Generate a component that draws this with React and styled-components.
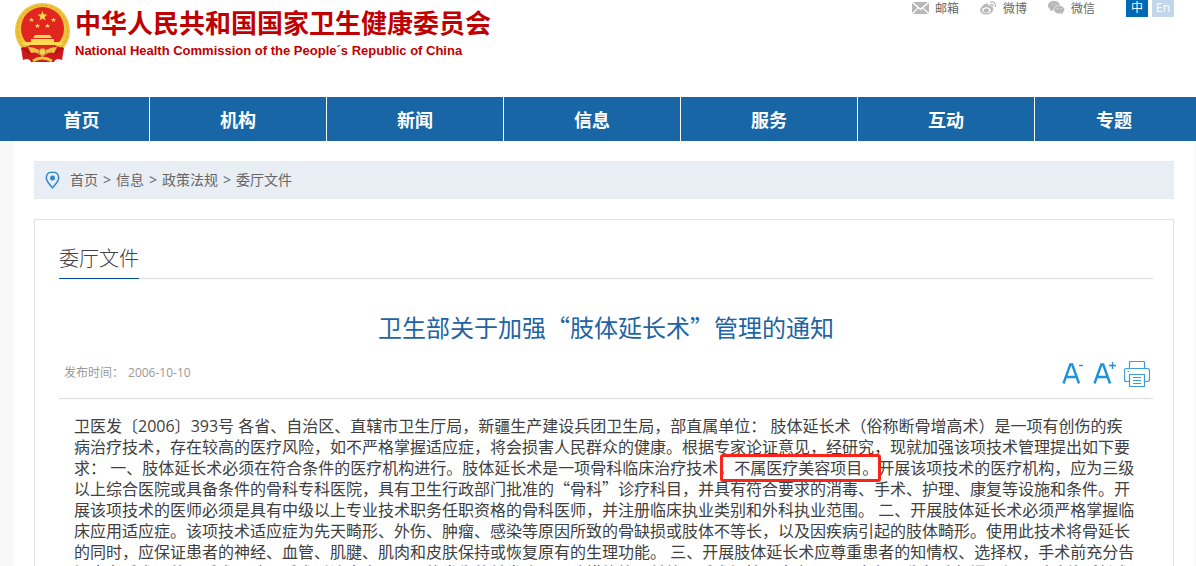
import React from 'react';
import styled, { createGlobalStyle } from 'styled-components';

const GlobalStyle = createGlobalStyle`
  * { box-sizing: border-box; }
  html { scrollbar-width: none; }
  body {
    margin: 0;
    background: #f8f8f8;
    color: #404040;
    font: 16px/21px "Noto Sans CJK SC", "Liberation Sans", sans-serif;
  }
  a { color: inherit; text-decoration: none; }
  h1, h2, p { margin: 0; padding: 0; font-weight: 400; }
  button { border: 0; padding: 0; margin: 0; background: none; font: inherit; cursor: pointer; }
  svg { display: block; flex: none; }
`;

const Header = styled.header`
  display: flex;
  justify-content: space-between;
  align-items: flex-start;
  height: 97px;
  padding: 0 22px 0 14px;
  background: #fff;
`;

const Brand = styled.a`
  display: flex;
  gap: 4px;
  padding-top: 2px;
  color: #c00000;
`;

const BrandText = styled.span`
  display: flex;
  flex-direction: column;
  white-space: nowrap;
`;

const BrandName = styled.strong`
  font-size: 26px;
  line-height: 40px;
  font-weight: 700;
`;

const BrandEnglish = styled.span`
  font: 700 13px/18px "Liberation Sans", sans-serif;
`;

const Tools = styled.div`
  display: flex;
  align-items: center;
  height: 17px;
  font-size: 12px;
  line-height: 16px;
  color: #666;
`;

const ToolLink = styled.a`
  display: flex;
  align-items: center;
  gap: 6px;
  height: 14px;
  margin-right: 21px;
  padding-bottom: 2px;
`;

const Language = styled.button`
  width: 22px;
  height: 17px;
  margin-left: ${(p) => (p.$current ? 10 : 4)}px;
  padding-bottom: 2px;
  font: 12px/15px "Open Sans", "Noto Sans CJK SC", sans-serif;
  color: #fff;
  background: ${(p) => (p.$current ? '#0068b7' : '#c2d8ea')};
`;

const Nav = styled.nav`
  display: flex;
  height: 44px;
  padding: 0 2px 0 14px;
  background: #1966a7;
`;

const NavLink = styled.a`
  flex: ${(p) => p.$grow} 1 0;
  border-right: 1px solid ${(p) => (p.$last ? 'transparent' : '#fff')};
  color: #fff;
  font-size: 18px;
  font-weight: 700;
  line-height: 44px;
  text-align: center;
`;

const Main = styled.main`
  margin: 0 2px 0 14px;
  padding: 20px;
  background: #fff;
`;

const Breadcrumb = styled.nav`
  display: flex;
  align-items: center;
  gap: 5px;
  height: 38px;
  padding: 0 0 1px 11px;
  background: #e9eef5;
  color: #666;
  font-family: "Open Sans", "Noto Sans CJK SC", sans-serif;
  font-size: 14px;
`;

const Pin = styled.svg`
  margin-right: 5px;
`;

const Panel = styled.article`
  margin-top: 20px;
  padding: 24px 20px 20px 24px;
  border: 1px solid #e1e3e4;
`;

const SectionHead = styled.div`
  display: flex;
  height: 35px;
  border-bottom: 1px solid #ddd;
`;

const SectionTitle = styled.h2`
  height: 35px;
  border-bottom: 1px solid #004f96;
  font-size: 20px;
  line-height: 28px;
  font-weight: 300;
`;

const Title = styled.h1`
  padding: 31px 0 1px;
  color: #2263a3;
  font-size: 24px;
  line-height: 34px;
  text-align: center;
`;

const Meta = styled.div`
  display: flex;
  justify-content: space-between;
  align-items: center;
  height: 54px;
  padding: 2px 3px 0 5px;
  border-bottom: 1px solid #ddd;
  color: #999;
  font-family: "Open Sans", "Noto Sans CJK SC", sans-serif;
  font-size: 12px;
`;

const PublishDate = styled.span`
  display: flex;
  gap: 4px;
`;

const Actions = styled.div`
  display: flex;
  gap: 8px;
  padding-top: 4px;
`;

const Body = styled.div`
  padding: 16px 10px 0 15px;
  white-space: nowrap;
`;

const Line = styled.span`
  display: block;
`;

const Latin = styled.span`
  font-family: "Open Sans", sans-serif;
  line-height: 1;
`;

const Marked = styled.mark`
  position: relative;
  background: none;
  color: inherit;

  &::after {
    content: "";
    position: absolute;
    inset: -1px -3px -3px 2px;
    border: 3px solid #f8261a;
    border-radius: 3px;
  }
`;

const Emblem = () => (
  <svg width="57" height="61" viewBox="0 0 57 61" aria-hidden="true">
    <circle cx="28.500" cy="28.500" r="27.500" fill="#efc33c" />
    <circle cx="28.500" cy="28.500" r="25" fill="none" stroke="#dca52b" strokeWidth="1" strokeDasharray="3 2" />
    <path d="M7 46Q28 39 50 46L48 58Q42 55 40 60H17Q15 55 9 58Z" fill="#cf1a1d" />
    <circle cx="28.500" cy="26.500" r="21.500" fill="#e0261f" />
    <path d="M28.500 9l1.300 3.600h3.700l-3 2.300 1.100 3.600-3.100-2.100-3.100 2.100 1.100-3.600-3-2.300h3.700z" fill="#fbd951" />
    <g fill="#fbd951">
      <path id="small-star" d="M17.500 15.500l.8 1.600h1.800l-1.400 1.200.5 1.700-1.700-1-1.700 1 .5-1.700-1.400-1.200h1.800z" />
      <use href="#small-star" x="22" />
      <use href="#small-star" x="6" y="6" />
      <use href="#small-star" x="16" y="6" />
      <path d="M21 33h15l2 3H19zM17 37h23v3h8v3H9v-3h8z" />
    </g>
    <path d="M14 45q8 0 14.500 5.500Q35 45 43 45l-3 6q-6-2-11.500 4Q23 49 17 51z" fill="#edc246" />
    <path d="M8 46q5 2 8 6M49 46q-5 2-8 6" fill="none" stroke="#b41217" strokeWidth="2" />
    <circle cx="28.500" cy="50" r="3.500" fill="#f4d05a" stroke="#c98a1d" />
    <path d="M19 59q9-6 19 0" fill="none" stroke="#efc33c" strokeWidth="3" />
  </svg>
);

const MailIcon = () => (
  <svg width="17" height="12" viewBox="0 0 17 12" fill="#b8b8b8" aria-hidden="true">
    <path d="M1 0h15L8.500 6.500zM0 1l5.500 4.800L0 11zM17 1v10l-5.500-5.200zM6.300 6.500l2.200 1.800 2.200-1.800L16 12H1z" />
  </svg>
);

const WeiboIcon = () => (
  <svg width="17" height="14" viewBox="0 0 17 14" fill="#b8b8b8" aria-hidden="true">
    <path fillRule="evenodd" d="M6.500 2.500C8 2.200 8.500 3.200 8 4.600c2-.8 4-.6 3.600 1.400 1.900.6 2.200 2.500 1 4.300C11 13 7.500 14 4.500 13.300 1 12.600-.8 10 .6 7.300 2 4.900 4.400 2.900 6.500 2.500zM6.300 6.200C3.700 6.200 2 7.600 2 9.300s1.700 2.900 4.300 2.900 4.400-1.300 4.400-3-1.800-3-4.400-3zM6 7.400c1.700-.3 3 .5 3 1.900s-1.300 2.400-2.900 2.400-2.800-.8-2.800-2S4.400 7.700 6 7.400z" />
    <path d="M10.500 1.200c3-1 5.500 1.300 4.800 4.300M10.800 3.500c1.500-.4 2.400.5 2.200 1.700" fill="none" stroke="#b8b8b8" strokeWidth="1.200" strokeLinecap="round" />
  </svg>
);

const WechatIcon = () => (
  <svg width="17" height="14" viewBox="0 0 17 14" aria-hidden="true">
    <path d="M6 0c3.300 0 6 2 6 4.700S9.300 9.400 6 9.400L4.500 9.200 2.200 10.500l.4-2.100C1 7.500 0 6.200 0 4.700 0 2 2.700 0 6 0z" fill="#b8b8b8" />
    <path d="M11.300 4.500c3.100 0 5.200 1.900 5.200 4.200 0 1.400-.8 2.500-2 3.300l.3 1.700-2-1c-3.800.7-6.800-1.200-6.800-4s2.200-4.200 5.300-4.200z" fill="#b8b8b8" stroke="#fff" strokeWidth=".6" />
    <path d="M4 3h.8M7.500 3h.8M9.200 7.500h.8M12.500 7.500h.8" stroke="#fff" />
  </svg>
);

const PinIcon = () => (
  <Pin width="15" height="18" viewBox="0 0 15 18" aria-hidden="true">
    <path d="M7.500 1C3.800 1 1.300 3.500 1.300 6.800c0 3.600 3.600 7 6.200 10 2.600-3 6.200-6.400 6.200-10C13.700 3.500 11.200 1 7.500 1z" fill="none" stroke="#2c87cf" strokeWidth="1.500" />
    <circle cx="7.500" cy="7" r="2.500" fill="#2c87cf" />
  </Pin>
);

const FontIcon = ({ larger }) => (
  <svg width="23" height="27" viewBox="0 0 23 27" fill="none" stroke="#1a93d9" aria-hidden="true">
    <path d="M1.500 22.500L8.300 3.500h1.900l6.800 19M4 16h10.500" strokeWidth="2.400" />
    <path d={larger ? 'M16 4.500h7M19.500 1v7' : 'M17 4.500h4'} strokeWidth="1.400" />
  </svg>
);

const PrintIcon = () => (
  <svg width="26" height="27" viewBox="0 0 26 27" fill="none" stroke="#3f9bd7" strokeWidth="1.200" aria-hidden="true">
    <path d="M5.500 7V1.500q0-1 1-1h13q1 0 1 1V7M5.500 20.500h-3q-2 0-2-2v-9q0-2 2-2h21q2 0 2 2v9q0 2-2 2h-3" />
    <path d="M5.500 13.500h15v12h-15zM9 16.500h8M9 19.500h8M9 22.500h8M3.500 10.500H5" />
  </svg>
);

const navItems = [
  ['首页', 135], ['机构', 176], ['新闻', 176], ['信息', 176],
  ['服务', 176], ['互动', 176], ['专题', 158],
];

const tools = [['邮箱', MailIcon], ['微博', WeiboIcon], ['微信', WechatIcon]];

const crumbs = ['首页', '信息', '政策法规', '委厅文件'];

const lines = [
  '卫医发〔2006〕393号 各省、自治区、直辖市卫生厅局，新疆生产建设兵团卫生局，部直属单位： 肢体延长术（俗称断骨增高术）是一项有创伤的疾',
  '病治疗技术，存在较高的医疗风险，如不严格掌握适应症，将会损害人民群众的健康。根据专家论证意见，经研究，现就加强该项技术管理提出如下要',
  '求： 一、肢体延长术必须在符合条件的医疗机构进行。肢体延长术是一项骨科临床治疗技术*，不属医疗美容项目。*开展该项技术的医疗机构，应为三级',
  '以上综合医院或具备条件的骨科专科医院，具有卫生行政部门批准的“骨科”诊疗科目，并具有符合要求的消毒、手术、护理、康复等设施和条件。开',
  '展该项技术的医师必须是具有中级以上专业技术职务任职资格的骨科医师，并注册临床执业类别和外科执业范围。 二、开展肢体延长术必须严格掌握临',
  '床应用适应症。该项技术适应症为先天畸形、外伤、肿瘤、感染等原因所致的骨缺损或肢体不等长，以及因疾病引起的肢体畸形。使用此技术将骨延长',
  '的同时，应保证患者的神经、血管、肌腱、肌肉和皮肤保持或恢复原有的生理功能。 三、开展肢体延长术应尊重患者的知情权、选择权，手术前充分告',
  '知患者手术目的、手术风险、手术后注意事项、可能发生的并发症及预防措施等，并签署手术知情同意书。四、各级卫生行政部门要加强对肢体延长术',
];

// Splits a line into Chinese text, marked passages (*...*) and digits or spaces.
const renderLine = (line) =>
  line.split(/(\*[^*]+\*|[0-9 ]+)/).map((part, i) => {
    if (part.startsWith('*')) return <Marked key={i}>{part.slice(1, -1)}</Marked>;
    return /^[0-9 ]+$/.test(part) ? <Latin key={i}>{part}</Latin> : part;
  });

export default function App() {
  return (
    <>
      <GlobalStyle />
      <Header>
        <Brand href="#">
          <Emblem />
          <BrandText>
            <BrandName>中华人民共和国国家卫生健康委员会</BrandName>
            <BrandEnglish lang="en">National Health Commission of the People´s Republic of China</BrandEnglish>
          </BrandText>
        </Brand>
        <Tools>
          {tools.map(([label, Icon]) => (
            <ToolLink href="#" key={label}><Icon />{label}</ToolLink>
          ))}
          <Language type="button" $current>中</Language>
          <Language type="button">En</Language>
        </Tools>
      </Header>
      <Nav>
        {navItems.map(([label, grow], i) => (
          <NavLink href="#" key={label} $grow={grow} $last={i === navItems.length - 1}>{label}</NavLink>
        ))}
      </Nav>
      <Main>
        <Breadcrumb>
          <PinIcon />
          {crumbs.map((label, i) => (
            <React.Fragment key={label}>
              {i > 0 && <span>&gt;</span>}
              <a href="#">{label}</a>
            </React.Fragment>
          ))}
        </Breadcrumb>
        <Panel>
          <SectionHead><SectionTitle>委厅文件</SectionTitle></SectionHead>
          <Title>卫生部关于加强“肢体延长术”管理的通知</Title>
          <Meta>
            <PublishDate><span>发布时间：</span><time>2006-10-10</time></PublishDate>
            <Actions>
              <button type="button" aria-label="缩小字号"><FontIcon /></button>
              <button type="button" aria-label="放大字号"><FontIcon larger /></button>
              <button type="button" aria-label="打印"><PrintIcon /></button>
            </Actions>
          </Meta>
          <Body>
            {lines.map((line, i) => <Line key={i}>{renderLine(line)}</Line>)}
          </Body>
        </Panel>
      </Main>
    </>
  );
}
